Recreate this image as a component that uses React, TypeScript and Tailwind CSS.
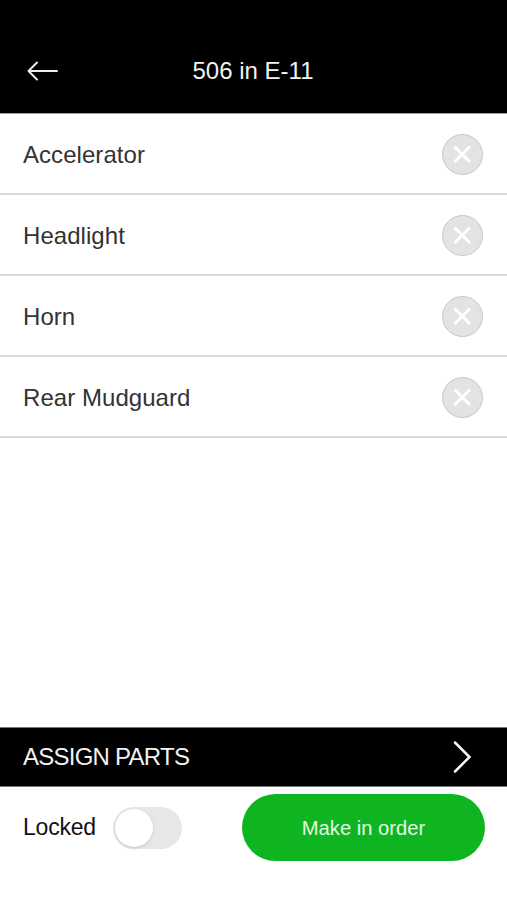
const parts = ["Accelerator", "Headlight", "Horn", "Rear Mudguard"];

function BackArrow() {
  return (
    <svg width="34" height="22" viewBox="0 0 34 22" fill="none" stroke="#eeeeee" strokeWidth="2" strokeLinecap="round" strokeLinejoin="round">
      <path d="M31 11H2.5M11 2.5L2.5 11L11 19.5" />
    </svg>
  );
}

function RemoveButton() {
  return (
    <button className="flex size-[41px] items-center justify-center rounded-full border border-[#c8c8c8] bg-[#e3e3e3]">
      <svg width="19" height="19" viewBox="0 0 19 19" stroke="#ffffff" strokeWidth="3">
        <path d="M1.5 1.5L17 17M17 1.5L1.5 17" />
      </svg>
    </button>
  );
}

export default function App() {
  return (
    <div className="flex h-[900px] w-full flex-col overflow-hidden bg-white font-['Liberation_Sans',Arial,sans-serif] text-2xl">
      <header className="grid h-[114px] shrink-0 grid-cols-[1fr_auto_1fr] items-center border-b border-[#a0a0a0] bg-black px-[26px] pt-[29px] text-[#f2f2f2]">
        <button className="w-fit">
          <BackArrow />
        </button>
        <h1 className="-ml-px">506 in E-11</h1>
      </header>

      <ul className="flex-1">
        {parts.map((part) => (
          <li key={part} className="flex h-[81px] items-center justify-between border-b-2 border-[#d8d8d8] pt-[2px] pr-6 pl-[23px] text-[#333333]">
            <span className="tracking-[0.05px]">{part}</span>
            <RemoveButton />
          </li>
        ))}
      </ul>

      <button className="flex h-[60px] shrink-0 items-center justify-between border-y border-[#777777] bg-black pr-[34px] pl-[23px] text-[#f2f2f2]">
        <span className="tracking-[-0.75px]">ASSIGN PARTS</span>
        <svg width="20" height="34" viewBox="0 0 20 34" fill="none" stroke="#f5f5f5" strokeWidth="2.5" strokeLinecap="round" strokeLinejoin="miter">
          <path d="M2 2.5L16.5 17L2 31.5" />
        </svg>
      </button>

      <footer className="flex h-[113px] shrink-0 items-start justify-between pt-[7px] pr-[22px] pl-[23px]">
        <div className="flex h-[67px] items-center">
          <span className="w-[90px] text-[23px] tracking-[-0.2px] text-[#111111]">Locked</span>
          <button role="switch" aria-checked="false" className="flex h-[42px] w-[69px] items-center rounded-full bg-[#e7e7e9] pl-[1.5px]">
            <span className="size-[38px] rounded-full bg-white shadow-[0_1px_3px_rgba(0,0,0,0.15)]" />
          </button>
        </div>
        <button className="h-[67px] w-[243px] rounded-full bg-[#0eb520] pt-px text-[20.2px] text-[#e3f8e5]">Make in order</button>
      </footer>
    </div>
  );
}
